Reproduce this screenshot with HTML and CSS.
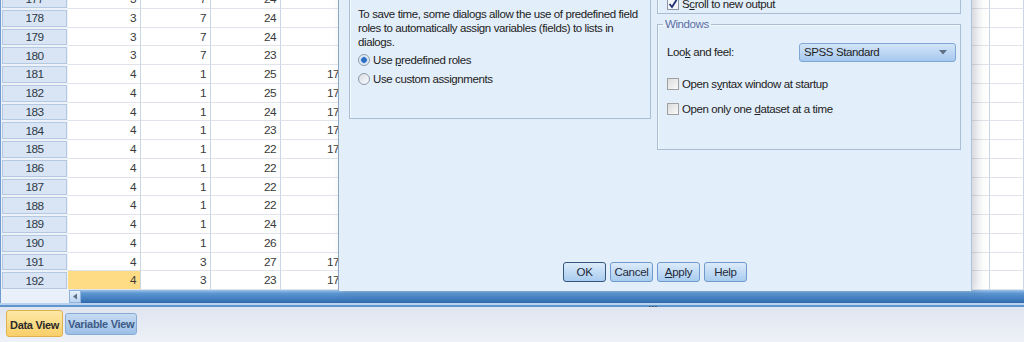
FILE: index.html
```html
<!DOCTYPE html>
<html lang="en">
<head>
    <meta charset="UTF-8">
    <meta name="viewport" content="width=device-width, initial-scale=1.0">
    <title>Data Editor - Options</title>
    <link rel="stylesheet" href="styles.css">
</head>
<body>
    <div class="app">
        <!-- data grid -->
        <div class="sheet">
            <div class="rows">
                <div class="row"><div class="rh"><span>177</span></div><div class="c c1">3</div><div class="c">7</div><div class="c">24</div><div class="c c4"></div><div class="c wide"></div><div class="c last"></div></div>
                <div class="row"><div class="rh"><span>178</span></div><div class="c c1">3</div><div class="c">7</div><div class="c">24</div><div class="c c4"></div><div class="c wide"></div><div class="c last"></div></div>
                <div class="row"><div class="rh"><span>179</span></div><div class="c c1">3</div><div class="c">7</div><div class="c">24</div><div class="c c4"></div><div class="c wide"></div><div class="c last"></div></div>
                <div class="row"><div class="rh"><span>180</span></div><div class="c c1">3</div><div class="c">7</div><div class="c">23</div><div class="c c4"></div><div class="c wide"></div><div class="c last"></div></div>
                <div class="row"><div class="rh"><span>181</span></div><div class="c c1">4</div><div class="c">1</div><div class="c">25</div><div class="c c4">17</div><div class="c wide"></div><div class="c last"></div></div>
                <div class="row"><div class="rh"><span>182</span></div><div class="c c1">4</div><div class="c">1</div><div class="c">25</div><div class="c c4">17</div><div class="c wide"></div><div class="c last"></div></div>
                <div class="row"><div class="rh"><span>183</span></div><div class="c c1">4</div><div class="c">1</div><div class="c">24</div><div class="c c4">17</div><div class="c wide"></div><div class="c last"></div></div>
                <div class="row"><div class="rh"><span>184</span></div><div class="c c1">4</div><div class="c">1</div><div class="c">23</div><div class="c c4">17</div><div class="c wide"></div><div class="c last"></div></div>
                <div class="row"><div class="rh"><span>185</span></div><div class="c c1">4</div><div class="c">1</div><div class="c">22</div><div class="c c4">17</div><div class="c wide"></div><div class="c last"></div></div>
                <div class="row"><div class="rh"><span>186</span></div><div class="c c1">4</div><div class="c">1</div><div class="c">22</div><div class="c c4"></div><div class="c wide"></div><div class="c last"></div></div>
                <div class="row"><div class="rh"><span>187</span></div><div class="c c1">4</div><div class="c">1</div><div class="c">22</div><div class="c c4"></div><div class="c wide"></div><div class="c last"></div></div>
                <div class="row"><div class="rh"><span>188</span></div><div class="c c1">4</div><div class="c">1</div><div class="c">22</div><div class="c c4"></div><div class="c wide"></div><div class="c last"></div></div>
                <div class="row"><div class="rh"><span>189</span></div><div class="c c1">4</div><div class="c">1</div><div class="c">24</div><div class="c c4"></div><div class="c wide"></div><div class="c last"></div></div>
                <div class="row"><div class="rh"><span>190</span></div><div class="c c1">4</div><div class="c">1</div><div class="c">26</div><div class="c c4"></div><div class="c wide"></div><div class="c last"></div></div>
                <div class="row"><div class="rh"><span>191</span></div><div class="c c1">4</div><div class="c">3</div><div class="c">27</div><div class="c c4">17</div><div class="c wide"></div><div class="c last"></div></div>
                <div class="row"><div class="rh"><span>192</span></div><div class="c c1 selected">4</div><div class="c">3</div><div class="c">23</div><div class="c c4">17</div><div class="c wide"></div><div class="c last"></div></div>
            </div>
        </div>

        <div class="hscroll">
            <div class="hs-corner"></div>
            <div class="hs-arrow">
                <svg width="6" height="7" viewBox="0 0 6 7"><path d="M5 0.5 L1 3.5 L5 6.5 Z" fill="#5c6f86"/></svg>
            </div>
            <div class="hs-track"></div>
        </div>
        <div class="splitter"><span class="grip"></span></div>

        <div class="tabs">
            <div class="tab tab-active">Data View</div>
            <div class="tab">Variable View</div>
        </div>

        <!-- options dialog -->
        <div class="dialog">
            <div class="dlg-cols">
                <fieldset class="group roles">
                    <legend>Roles</legend>
                    <p class="note">To save time, some dialogs allow the use of predefined field<br>roles to automatically assign variables (fields) to lists in<br>dialogs.</p>
                    <div class="opt"><span class="radio on"></span><span>Use <u>p</u>redefined roles</span></div>
                    <div class="opt"><span class="radio"></span><span>Use custom assignments</span></div>
                </fieldset>
                <div class="right-col">
                    <fieldset class="group output">
                        <legend>Output</legend>
                        <div class="opt"><span class="check on">
                            <svg width="10" height="10" viewBox="0 0 10 10"><path d="M1.5 5 L4 8 L8.5 1" fill="none" stroke="#1f2f6e" stroke-width="1.8"/></svg>
                        </span><span>S<u>c</u>roll to new output</span></div>
                    </fieldset>
                    <fieldset class="group windows">
                        <legend>Windows</legend>
                        <div class="field">
                            <span class="field-label">Loo<u>k</u> and feel:</span>
                            <div class="select"><span>SPSS Standard</span>
                                <svg width="8" height="5" viewBox="0 0 8 5"><path d="M0 0 H8 L4 4.5 Z" fill="#5e6f85"/></svg>
                            </div>
                        </div>
                        <div class="opt first"><span class="check"></span><span>Open s<u>y</u>ntax window at startup</span></div>
                        <div class="opt"><span class="check"></span><span>Open only one <u>d</u>ataset at a time</span></div>
                    </fieldset>
                </div>
            </div>
            <div class="buttons">
                <button class="btn default">OK</button>
                <button class="btn">Cancel</button>
                <button class="btn"><u>A</u>pply</button>
                <button class="btn">Help</button>
            </div>
        </div>
    </div>
</body>
</html>
```

FILE: styles.css
```css
body{
    margin: 0;
    background: #ffffff;
    font-family: "Liberation Sans", Arial, sans-serif;
    color: #333;
}
.app{
    position: relative;
    width: 1024px;
    height: 342px;
    overflow: hidden;
    background: #e6eaf3;
}

/* grid */
.sheet{
    height: 290px;
    overflow: hidden;
    background: #fff;
    border-left: 1px solid #6f9ad0;
}
.rows{
    margin-top: -10px;
}
.row{
    display: flex;
    height: 18.75px;
    font-size: 11.8px;
    letter-spacing: -0.6px;
}
.rh{
    width: 67px;
    flex: none;
    padding: 1px;
    box-sizing: border-box;
    background: #eef3fa;
}
.rh span{
    display: flex;
    align-items: center;
    justify-content: center;
    height: 100%;
    box-sizing: border-box;
    background: #d9e5f4;
    border: 1px solid #b4c8e1;
    color: #2f3a48;
}
.c{
    width: 70px;
    flex: none;
    box-sizing: border-box;
    border-right: 1px solid #c9d6e6;
    border-bottom: 1px solid #e0e4ea;
    text-align: right;
    padding-right: 4px;
    line-height: 18px;
    color: #3a3a3a;
}
.c1{
    width: 73px;
}
.c4{
    width: 66px;
    padding-right: 7px;
}
.wide{
    width: 643px;
}
.last{
    flex: 1;
}
.selected{
    background: #fddc85;
}

/* horizontal scrollbar + splitter */
.hscroll{
    display: flex;
    height: 13px;
}
.hs-corner{
    width: 69px;
    background: #e9f0fa;
    border-left: 1px solid #6f9ad0;
    box-sizing: border-box;
}
.hs-arrow{
    width: 12px;
    display: flex;
    align-items: center;
    justify-content: center;
    background: linear-gradient(#e6f0fb, #b9d3ef);
    border: 1px solid #8fb3dc;
    box-sizing: border-box;
}
.hs-track{
    flex: 1;
    background: linear-gradient(#9cc3ea 0, #5d97d2 25%, #4883c3 60%, #2f6aad 100%);
}
.splitter{
    height: 2px;
    background: #b9d2ee;
    border-bottom: 2px solid #5f95cf;
}
.grip{
    display: block;
    width: 9px;
    height: 1px;
    margin-left: 649px;
    padding-top: 3px;
    background: repeating-linear-gradient(90deg, #4a5a70 0 2px, transparent 2px 3px);
    background-clip: content-box;
}

/* bottom tabs */
.tabs{
    display: flex;
    align-items: flex-start;
    gap: 2px;
    height: 35px;
    padding-left: 6px;
    background: linear-gradient(#dfe5f1, #eef1f7);
}
.tab{
    margin-top: 6px;
    height: 22px;
    padding: 0 2px;
    display: flex;
    align-items: center;
    font-size: 11px;
    font-weight: bold;
    letter-spacing: -0.3px;
    color: #3d5b86;
    background: linear-gradient(#c6dbf2, #9dbfe6);
    border: 1px solid #88abd6;
    border-radius: 3px;
    box-sizing: border-box;
}
.tab-active{
    margin-top: 3px;
    height: 27px;
    padding: 3px 3px 0;
    color: #2a2a2a;
    background: linear-gradient(#fde8a8, #f9cf68);
    border-color: #e0b24e;
}

/* dialog */
.dialog{
    position: absolute;
    left: 338px;
    top: -40px;
    width: 634px;
    height: 331px;
    box-sizing: border-box;
    background: #e2eefa;
    border-left: 1px solid #8ea7c2;
    border-right: 1px solid #aec3da;
    box-shadow: 5px 0 9px rgba(60, 70, 90, 0.22);
    display: flex;
    flex-direction: column;
    font-size: 11.5px;
    letter-spacing: -0.4px;
    color: #222;
}
.dlg-cols{
    display: flex;
    align-items: flex-start;
    gap: 6px;
    padding: 20px 0 0 10px;
}
.group{
    margin: 0;
    min-width: 0;
    border: 1px solid #a9bdd3;
    box-shadow: inset 1px 1px 0 #f3f8fd;
    padding: 0 9px;
}
.group legend{
    padding: 0 2px;
    margin-left: -4px;
    line-height: 15px;
    color: #5a6ea3;
}
.roles{
    width: 302px;
    box-sizing: border-box;
    margin-top: 8px;
    padding: 4px 8px 30px;
}
.note{
    margin: 0 0 1px;
    line-height: 14px;
}
.roles .opt{
    height: 19px;
}
.opt{
    display: flex;
    align-items: center;
    height: 18px;
    gap: 3px;
}
.right-col{
    width: 304px;
    display: flex;
    flex-direction: column;
}
.output{
    padding: 0 9px;
}
.windows{
    margin-top: 3px;
    padding: 10px 4px 31px 9px;
}
.windows .first{
    margin-top: 13px;
    margin-bottom: 7px;
}
.field{
    display: flex;
    align-items: center;
    height: 20px;
}
.field-label{
    width: 132px;
    flex: none;
}
.select{
    width: 157px;
    height: 19px;
    flex: none;
    box-sizing: border-box;
    display: flex;
    align-items: center;
    justify-content: space-between;
    padding: 0 8px 0 4px;
    background: linear-gradient(#d3e5f8, #a6c8ee);
    border: 1px solid #7fa7d4;
    border-radius: 3px;
    color: #1e1e1e;
}
.check{
    width: 12px;
    height: 12px;
    flex: none;
    box-sizing: border-box;
    border: 1px solid #a0a0a0;
    background: linear-gradient(135deg, #dcdcdc, #fafafa);
    display: flex;
    align-items: center;
    justify-content: center;
}
.check.on{
    background: #f4f6f9;
    border-color: #8c96a4;
}
.radio{
    width: 12px;
    height: 12px;
    flex: none;
    box-sizing: border-box;
    border-radius: 50%;
    border: 1px solid #8d99a8;
    background: linear-gradient(135deg, #d8dde4, #fafbfc);
}
.radio.on{
    background: radial-gradient(circle, #2f6fc0 0 2.5px, #9cc6f0 3px, #e9eef4 4px);
}
.buttons{
    margin-top: auto;
    padding-bottom: 9px;
    display: flex;
    justify-content: center;
    gap: 4px;
}
.btn{
    width: 43px;
    height: 20px;
    padding: 0;
    font-family: inherit;
    font-size: 11.5px;
    letter-spacing: -0.3px;
    color: #1e2a3a;
    background: linear-gradient(#dcebfa, #a9ccef);
    border: 1px solid #6f9bcc;
    border-radius: 3px;
}
.btn.default{
    border-color: #35577f;
}
```
